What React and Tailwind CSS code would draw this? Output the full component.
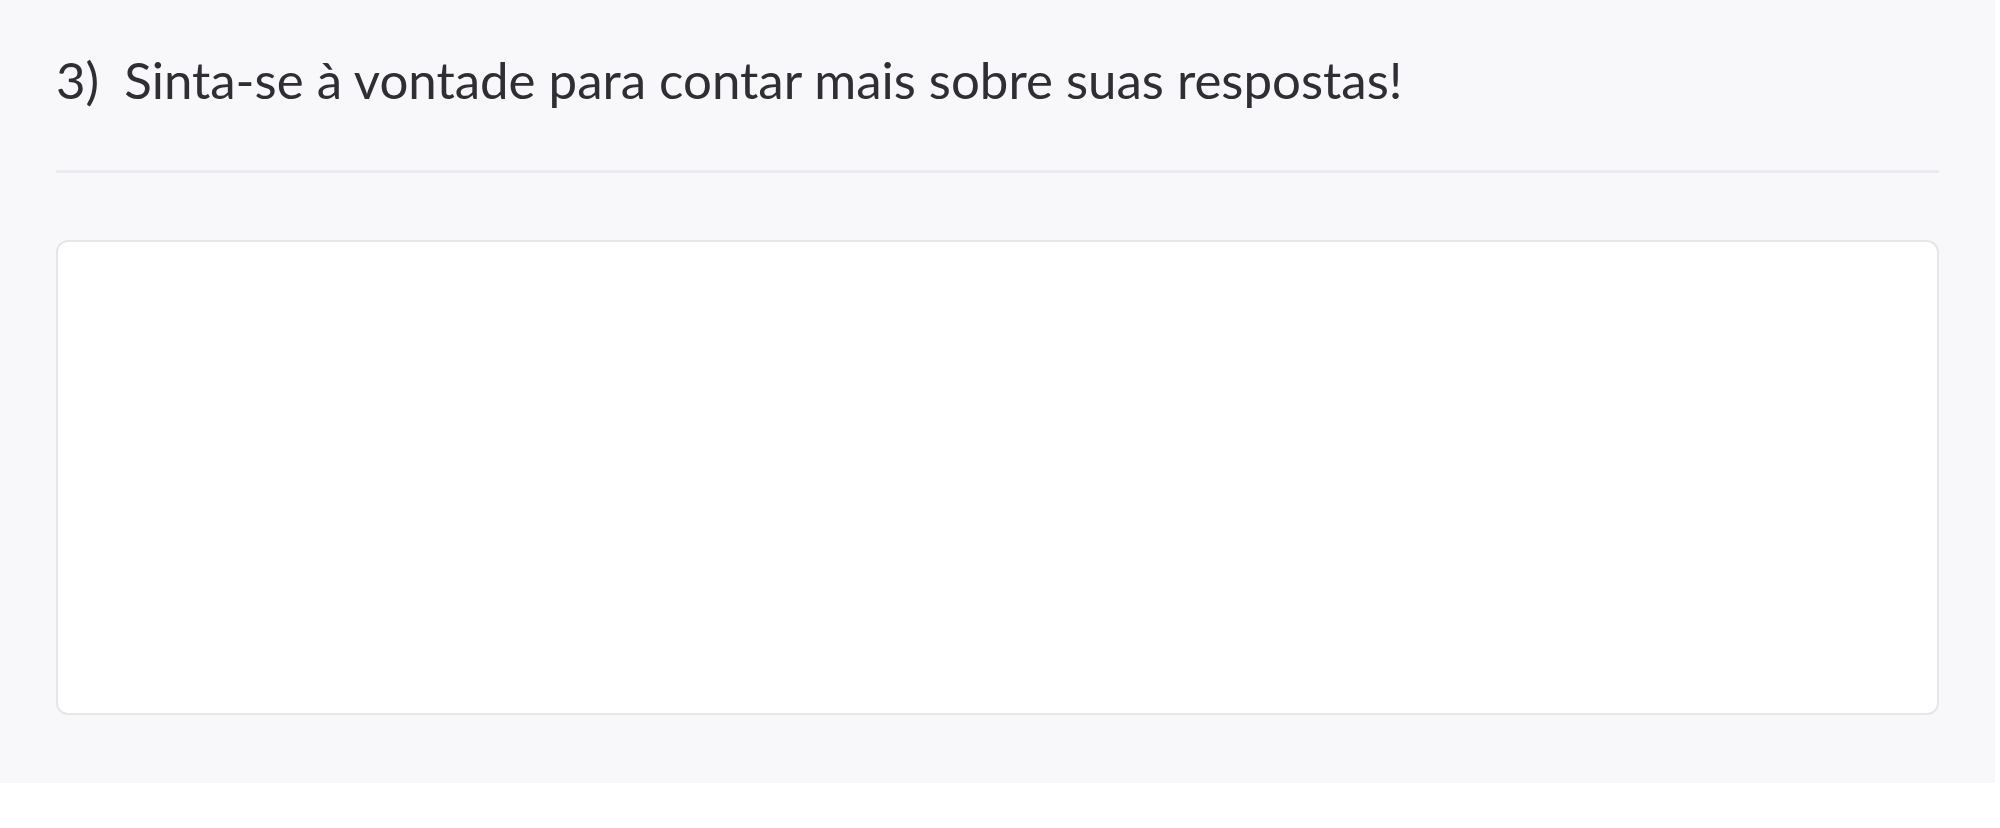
import React from 'react'

export default function App() {
  return (
    <div className="w-[2000px] h-[828px] bg-white" style={{ fontFamily: 'Lato, "Open Sans", sans-serif' }}>
      <div className="w-[1995px] h-[783px] bg-[#f8f8fa] px-[56px] pt-[48px]">
        <h2 className="flex text-[51px] leading-[64px] text-[#2e2e33] font-normal">
          <span className="mr-[25px]">3)</span>
          <span>Sinta-se à vontade para contar mais sobre suas respostas!</span>
        </h2>
        <div className="mt-[58px] h-[3px] bg-[#ebebef]" />
        <textarea className="mt-[67px] block w-full h-[475px] bg-white border-2 border-[#e6e6ea] rounded-[12px] resize-none outline-none p-4" />
      </div>
    </div>
  )
}
